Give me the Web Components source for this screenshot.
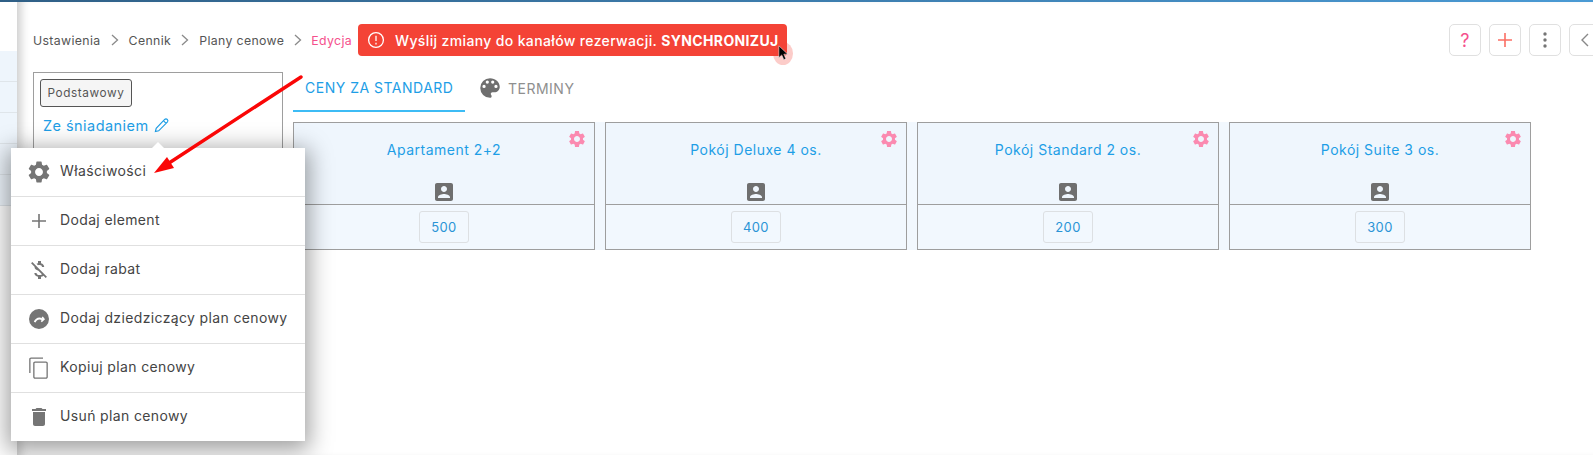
<!DOCTYPE html>
<html lang="pl">
<head>
<meta charset="utf-8">
<title>Plany cenowe</title>
<style>
  html, body { margin: 0; height: 100%; }
  body { overflow: hidden; background: #fff; font-family: Inter, "Liberation Sans", sans-serif; color: #444; }
</style>
</head>
<body>
<plan-page></plan-page>

<script>
'use strict';

const ICONS = {
  gear: 'M19.14 12.94c.04-.3.06-.61.06-.94 0-.32-.02-.64-.07-.94l2.03-1.58c.18-.14.23-.41.12-.61l-1.92-3.32c-.12-.22-.37-.29-.59-.22l-2.39.96c-.5-.38-1.03-.7-1.62-.94l-.36-2.54c-.04-.24-.24-.41-.48-.41h-3.84c-.24 0-.43.17-.47.41l-.36 2.54c-.59.24-1.13.57-1.62.94l-2.39-.96c-.22-.08-.47 0-.59.22L2.74 8.87c-.12.21-.08.47.12.61l2.03 1.58c-.05.3-.09.63-.09.94s.02.64.07.94l-2.03 1.58c-.18.14-.23.41-.12.61l1.92 3.32c.12.22.37.29.59.22l2.39-.96c.5.38 1.03.7 1.62.94l.36 2.54c.05.24.24.41.48.41h3.84c.24 0 .44-.17.47-.41l.36-2.54c.59-.24 1.13-.56 1.62-.94l2.39.96c.22.08.47 0 .59-.22l1.92-3.32c.12-.22.07-.47-.12-.61l-2.01-1.58zM12 15.6c-1.98 0-3.6-1.62-3.6-3.6s1.62-3.6 3.6-3.6 3.6 1.62 3.6 3.6-1.62 3.6-3.6 3.6z',
  thinPlus: 'M19 12.8h-6.2V19h-1.6v-6.2H5v-1.6h6.2V5h1.6v6.2H19z',
  noMoney: 'M12.5 6.9c1.78 0 2.44.85 2.5 2.1h2.21c-.07-1.72-1.12-3.3-3.21-3.81V3h-3v2.16c-.53.12-1.03.3-1.48.54l1.47 1.47c.41-.17.91-.27 1.51-.27zM5.33 4.06L4.06 5.33 7.5 8.77c0 2.08 1.56 3.21 3.91 3.91l3.51 3.51c-.34.48-1.05.91-2.42.91-2.06 0-2.87-.92-2.98-2.1h-2.2c.12 2.19 1.76 3.42 3.68 3.83V21h3v-2.15c.96-.18 1.83-.55 2.46-1.12l2.22 2.22 1.27-1.27L5.33 4.06z',
  copy: 'M16 1.5H4C3 1.5 2.2 2.3 2.2 3.3V17h1.3V3.3c0-.3.2-.5.5-.5h12zM19 5.5H8c-1 0-1.8.8-1.8 1.8V21c0 1 .8 1.8 1.8 1.8h11c1 0 1.8-.8 1.8-1.8V7.3c0-1-.8-1.8-1.8-1.8zm.5 15.5c0 .3-.2.5-.5.5H8c-.3 0-.5-.2-.5-.5V7.3c0-.3.2-.5.5-.5h11c.3 0 .5.2.5.5z',
  trash: 'M6 19c0 1.1.9 2 2 2h8c1.1 0 2-.9 2-2V7H6v12zM19 4h-3.5l-1-1h-5l-1 1H5v2h14V4z',
  palette: 'M12 3a9 9 0 0 0 0 18c.83 0 1.5-.67 1.5-1.5 0-.39-.15-.74-.39-1.01-.23-.26-.38-.61-.38-.99 0-.83.67-1.5 1.5-1.5H16c2.76 0 5-2.24 5-5 0-4.42-4.03-8-9-8zm-5.5 9a1.5 1.5 0 1 1 0-3 1.5 1.5 0 0 1 0 3zm3-4a1.5 1.5 0 1 1 0-3 1.5 1.5 0 0 1 0 3zm5 0a1.5 1.5 0 1 1 0-3 1.5 1.5 0 0 1 0 3zm3 4a1.5 1.5 0 1 1 0-3 1.5 1.5 0 0 1 0 3z',
  person: 'M19 3H5c-1.1 0-2 .9-2 2v14c0 1.1.9 2 2 2h14c1.1 0 2-.9 2-2V5c0-1.1-.9-2-2-2zm-7 3c1.66 0 3 1.34 3 3s-1.34 3-3 3-3-1.34-3-3 1.34-3 3-3zm6 12H6v-1c0-2 4-3.1 6-3.1s6 1.1 6 3.1v1z',
  inherit: 'M12 2a10 10 0 1 0 0 20 10 10 0 0 0 0-20zm6 10.2-3.2 3-1.1-1.2 1.1-1c-1.8-.9-3.3-.8-4.6.2-.7.5-1.3 1.4-1.7 2.3l-1.7-.8c.5-1.2 1.3-2.3 2.3-3 1.9-1.4 4.1-1.5 6.4-.2l-.9-1.1 1.2-1z',
  pencil: 'M16.5 3.5a2.6 2.6 0 0 1 3.7 3.7L8 19.5l-4.6 1.1L4.5 16 16.5 3.5zM15 5.5l3.5 3.5'
};

function icon(name, size, color) {
  return `<svg width="${size}" height="${size}" viewBox="0 0 24 24" fill="${color}"><path d="${ICONS[name]}"/></svg>`;
}

class MenuItem extends HTMLElement {
  constructor() {
    super();
    const shadow = this.attachShadow({ mode: 'open' });
    shadow.innerHTML = `
<style>
  :host { display: flex; align-items: center; height: 48px; padding-left: 16px; gap: 9px; border-bottom: 1px solid #e0e0e0; font-size: 14px; color: #444; white-space: nowrap; }
  :host(:last-child) { border-bottom: 0; }
  :host([icon=gear]) svg { transform: scale(1.1); }
  svg { display: block; flex: none; }
  span { margin-bottom: 3px; }
</style>
${icon(this.getAttribute('icon'), 24, '#757575')}
<span><slot></slot></span>`;
  }
}

class PopupMenu extends HTMLElement {
  constructor() {
    super();
    const shadow = this.attachShadow({ mode: 'open' });
    shadow.innerHTML = `
<style>
  :host { position: absolute; left: 11px; top: 148px; width: 294px; background: #fff; box-shadow: 0 5px 22px 4px rgba(0,0,0,.38); }
  .tip { position: absolute; left: 141px; top: -6px; width: 0; height: 0; border: 6px solid transparent; border-top: 0; border-bottom-color: #fff; }
</style>
<div class="tip"></div>
<slot></slot>`;
  }
}

class CrumbBar extends HTMLElement {
  constructor() {
    super();
    const shadow = this.attachShadow({ mode: 'open' });
    shadow.innerHTML = `
<style>
  :host { display: flex; align-items: center; gap: 10px; font-size: 12.3px; color: #555; white-space: nowrap; }
  svg { display: block; }
  .on { color: #f5508c; margin-left: -1px; }
</style>
<span>Ustawienia</span>${this.chev()}<span>Cennik</span>${this.chev()}<span>Plany cenowe</span>${this.chev()}<span class="on">Edycja</span>`;
  }
  chev() {
    return '<svg width="8" height="12" viewBox="0 0 8 12" fill="none" stroke="#8a8a8a" stroke-width="1.3"><path d="M1 1l5.5 5L1 11"/></svg>';
  }
}

class SyncBanner extends HTMLElement {
  constructor() {
    super();
    const shadow = this.attachShadow({ mode: 'open' });
    shadow.innerHTML = `
<style>
  :host { display: flex; align-items: center; position: relative; flex: none; box-sizing: border-box; width: 429px; height: 32px; margin-left: 6px; padding-left: 9px; gap: 10px; background: #f44336; border-radius: 4px; color: #fff; font-size: 14px; font-weight: 500; white-space: nowrap; }
  b { font-weight: 800; letter-spacing: .45px; }
  svg { display: block; flex: none; }
  .click { position: absolute; left: 415px; top: 18px; width: 20px; height: 23px; border-radius: 50%; background: rgba(244,67,54,.27); }
  .cursor { position: absolute; left: 420px; top: 21px; }
</style>
<svg width="18" height="18" viewBox="0 0 18 18" fill="none" stroke="#fff" stroke-width="1.3"><circle cx="9" cy="9" r="7.4"/><path d="M9 4.7v5.4M9 11.8v1.6"/></svg>
<span><slot></slot></span>
<div class="click"></div>
<svg class="cursor" width="11" height="16" viewBox="0 0 13 19"><path d="M1 1v14l3.4-3.2 2.5 5.6 2.4-1-2.4-5.5h4.6z" fill="#000" stroke="#fff" stroke-width=".6"/></svg>`;
  }
}

class SquareButton extends HTMLElement {
  constructor() {
    super();
    const shadow = this.attachShadow({ mode: 'open' });
    shadow.innerHTML = `
<style>
  :host { display: flex; align-items: center; justify-content: center; flex: none; box-sizing: border-box; width: 32px; height: 32px; background: #fff; border: 1px solid #e0e0e0; border-radius: 5px; font-size: 18px; }
</style>
<slot></slot>`;
  }
}

class PlanBox extends HTMLElement {
  constructor() {
    super();
    const shadow = this.attachShadow({ mode: 'open' });
    shadow.innerHTML = `
<style>
  :host { display: block; box-sizing: border-box; width: 250px; height: 120px; padding: 6px 6px; border: 1px solid #9e9e9e; background: #fff; flex: none; }
  .base { display: flex; align-items: center; justify-content: center; box-sizing: border-box; width: 92px; height: 28px; border: 1px solid #555; border-radius: 3px; background: #f5f5f5; color: #555; font-size: 11.8px; letter-spacing: .6px; }
  .name { display: flex; align-items: center; gap: 4px; margin: 10px 0 0 3px; color: #1e9ee6; font-size: 14.5px; letter-spacing: .45px; }
  svg { display: block; }
</style>
<div class="base">Podstawowy</div>
<div class="name"><span>Ze śniadaniem</span><svg width="17" height="17" viewBox="0 0 24 24" fill="none" stroke="#1e9ee6" stroke-width="1.6"><path d="${ICONS.pencil}"/></svg></div>`;
  }
}

class TabBar extends HTMLElement {
  constructor() {
    super();
    const shadow = this.attachShadow({ mode: 'open' });
    shadow.innerHTML = `
<style>
  :host { display: flex; height: 40px; font-size: 14px; white-space: nowrap; letter-spacing: .5px; }
  .tab { display: flex; align-items: center; box-sizing: border-box; height: 40px; padding: 0 12px; color: #8f8f8f; gap: 5px; }
  .tab.on { width: 172px; color: #1e9ee6; border-bottom: 2px solid #3dbcf5; padding-bottom: 8px; }
  .tab.off { padding: 0 0 8px 12px; }
  svg { display: block; }
</style>
<div class="tab on">CENY ZA STANDARD</div>
<div class="tab off">${icon('palette', 26, '#6f6f6f')}<span>TERMINY</span></div>`;
  }
}

class RoomCard extends HTMLElement {
  constructor() {
    super();
    const shadow = this.attachShadow({ mode: 'open' });
    shadow.innerHTML = `
<style>
  :host { display: block; box-sizing: border-box; position: relative; width: 302px; height: 128px; background: #eff6fd; border: 1px solid #9e9e9e; color: #1e9ee6; }
  .head { box-sizing: border-box; height: 82px; border-bottom: 1px solid #9e9e9e; display: flex; flex-direction: column; align-items: center; padding-top: 18px; font-size: 14px; letter-spacing: .5px; }
  .head .title { height: 39px; }
  .gear { position: absolute; right: 7px; top: 6px; }
  .foot { display: flex; align-items: center; justify-content: center; height: 44px; background: #f2f8fe; }
  .price { display: flex; align-items: center; justify-content: center; box-sizing: border-box; width: 50px; height: 32px; border: 1px solid #dde0e3; border-radius: 3px; font-size: 13px; color: #2a94d6; }
  svg { display: block; }
</style>
<div class="gear">${icon('gear', 20, '#fb8ab0')}</div>
<div class="head"><div class="title"><slot></slot></div>${icon('person', 24, '#6f6f6f')}</div>
<div class="foot"><div class="price">${this.getAttribute('price')}</div></div>`;
  }
}

class PlanPage extends HTMLElement {
  constructor() {
    super();
    const shadow = this.attachShadow({ mode: 'open' });
    shadow.innerHTML = `
<style>
  :host { display: block; position: relative; width: 1593px; height: 455px; overflow: hidden; background: #fff; letter-spacing: .36px; }
  .topline { height: 2px; background: linear-gradient(90deg, #2f5f86, #4a9ad4); }
  .layout { display: flex; height: 453px; }
  .side { flex: none; width: 17px; padding-top: 49px; background: #fff; }
  .side div { height: 30px; background: #eef5fc; border-bottom: 1px solid #dfe5ea; }
  .main { flex: 1; padding: 22px 0 0 16px; box-shadow: inset 10px 0 10px -6px rgba(0,0,0,.2); min-width: 0; }
  .top { display: flex; align-items: center; height: 32px; }
  .tools { display: flex; gap: 8px; margin-left: auto; width: 144px; flex: none; }
  .body { display: flex; margin-top: 16px; gap: 10px; }
  .right { flex: none; }
  .rooms { display: flex; gap: 10px; margin-top: 10px; background: #f2f8fe; }
  svg { display: block; }
  .arrow { position: absolute; left: 0; top: 0; pointer-events: none; }
</style>
<div class="topline"></div>
<div class="layout">
  <div class="side"><div></div><div></div><div></div><div></div><div></div></div>
  <div class="main">
    <div class="top">
      <crumb-bar></crumb-bar>
      <sync-banner>Wyślij zmiany do kanałów rezerwacji. <b>SYNCHRONIZUJ</b></sync-banner>
      <div class="tools">
        <square-button><span style="color:#f5508c">?</span></square-button>
        <square-button>${icon('thinPlus', 24, '#fb6f64')}</square-button>
        <square-button><svg width="4" height="18" viewBox="0 0 4 18" fill="#757575"><circle cx="2" cy="3" r="1.7"/><circle cx="2" cy="9" r="1.7"/><circle cx="2" cy="15" r="1.7"/></svg></square-button>
        <square-button><svg width="10" height="14" viewBox="0 0 10 14" fill="none" stroke="#888" stroke-width="1.4"><path d="M8 1L2 7l6 6"/></svg></square-button>
      </div>
    </div>
    <div class="body">
      <plan-box></plan-box>
      <div class="right">
        <tab-bar></tab-bar>
        <div class="rooms">
          <room-card price="500">Apartament 2+2</room-card>
          <room-card price="400">Pokój Deluxe 4 os.</room-card>
          <room-card price="200">Pokój Standard 2 os.</room-card>
          <room-card price="300">Pokój Suite 3 os.</room-card>
        </div>
      </div>
    </div>
  </div>
</div>
<popup-menu>
  <menu-item icon="gear">Właściwości</menu-item>
  <menu-item icon="thinPlus">Dodaj element</menu-item>
  <menu-item icon="noMoney">Dodaj rabat</menu-item>
  <menu-item icon="inherit">Dodaj dziedziczący plan cenowy</menu-item>
  <menu-item icon="copy">Kopiuj plan cenowy</menu-item>
  <menu-item icon="trash">Usuń plan cenowy</menu-item>
</popup-menu>
<svg class="arrow" width="320" height="190" viewBox="0 0 320 190" fill="none"><path d="M301 77L166 165" stroke="#fa0606" stroke-width="3.4" stroke-linecap="round"/><path d="M154 173l13-16 7 11z" fill="#fa0606"/></svg>`;
  }
}

customElements.define('menu-item', MenuItem);
customElements.define('popup-menu', PopupMenu);
customElements.define('crumb-bar', CrumbBar);
customElements.define('sync-banner', SyncBanner);
customElements.define('square-button', SquareButton);
customElements.define('plan-box', PlanBox);
customElements.define('tab-bar', TabBar);
customElements.define('room-card', RoomCard);
customElements.define('plan-page', PlanPage);
</script>
</body>
</html>
